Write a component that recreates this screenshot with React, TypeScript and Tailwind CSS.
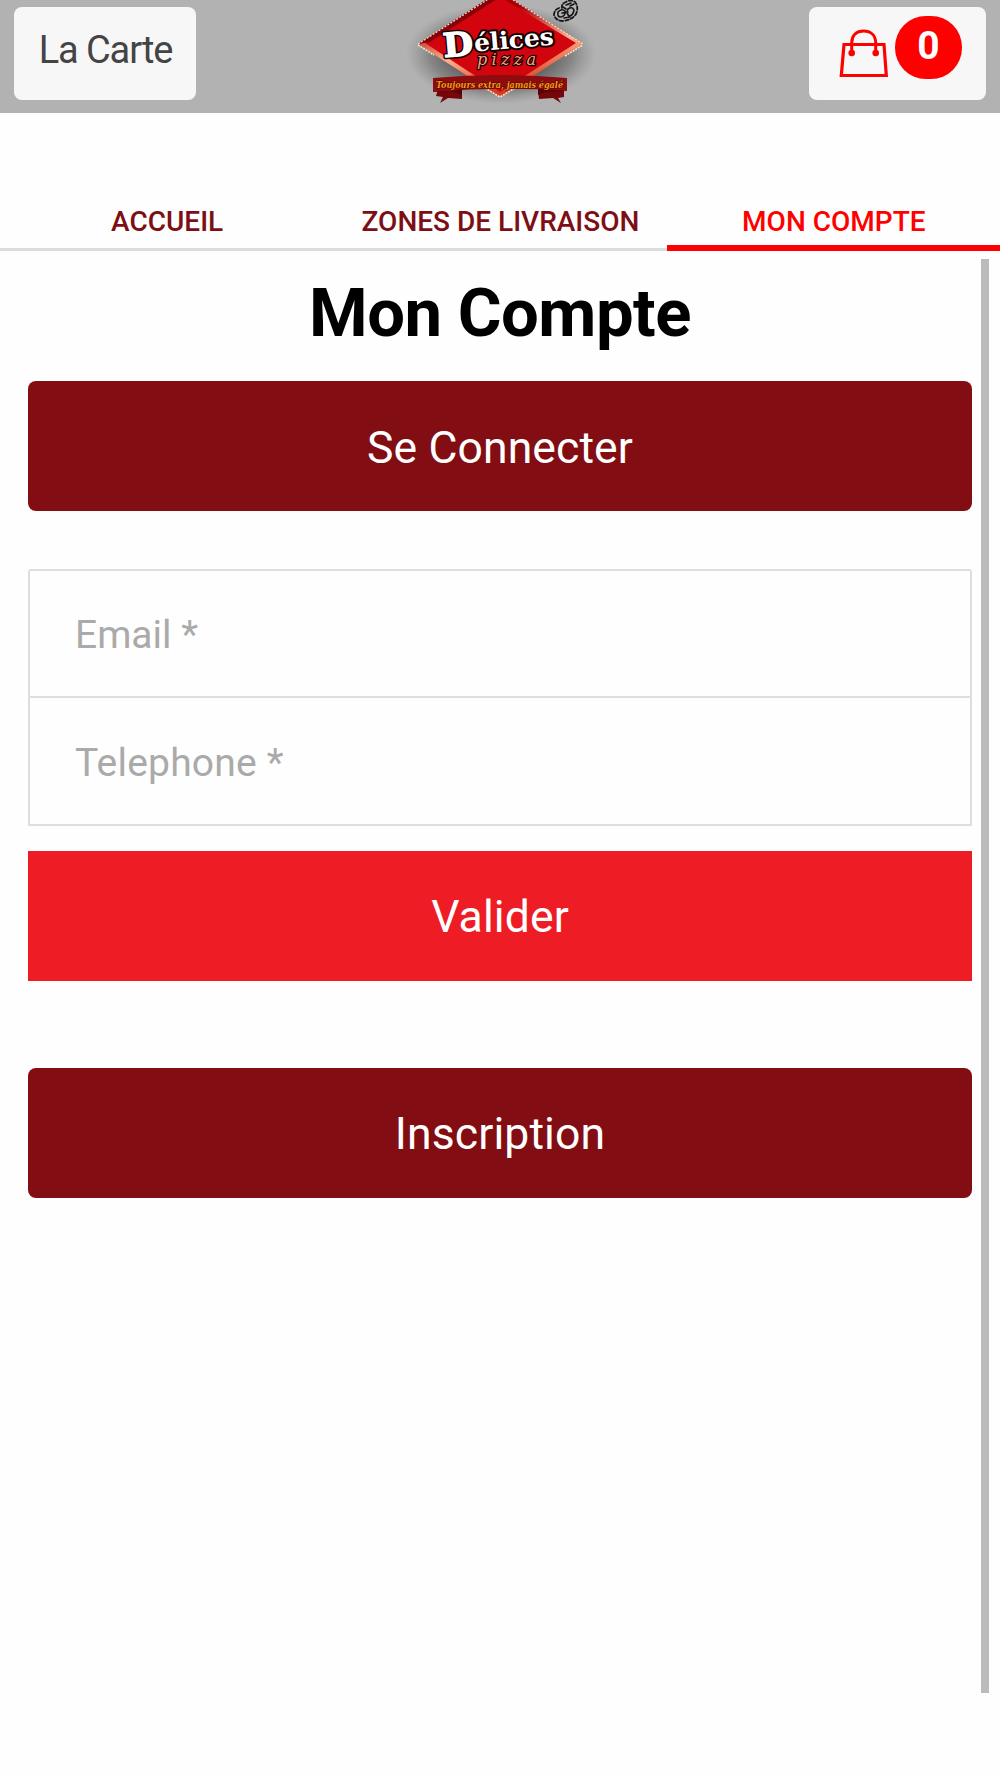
import React from 'react';
import clsx from 'clsx';

interface Tab {
    label: string;
    active?: boolean;
}

const tabs: Tab[] = [
    { label: 'ACCUEIL' },
    { label: 'ZONES DE LIVRAISON' },
    { label: 'MON COMPTE', active: true },
];

const BagIcon: React.FC = () => (
    <svg width="50" height="50" viewBox="0 0 50 50" fill="none" stroke="#ff0000" strokeWidth="3">
        <path d="M5 15.5H45L47.3 46.5H2.3Z" strokeWidth="3.2" />
        <path d="M12.7 24V14C12.7 6 17.5 2 24.5 2S36.7 6 36.7 14V24" />
        <circle cx="12.7" cy="24" r="3.3" fill="#ff0000" stroke="none" />
        <circle cx="36.7" cy="24" r="3.3" fill="#ff0000" stroke="none" />
    </svg>
);

const Logo: React.FC = () => (
    <svg width="200" height="113" viewBox="0 0 200 113">
        <defs>
            <radialGradient id="shadow">
                <stop offset="0.4" stopColor="#333" stopOpacity="0.8" />
                <stop offset="0.75" stopColor="#444" stopOpacity="0.4" />
                <stop offset="1" stopColor="#666" stopOpacity="0" />
            </radialGradient>
            <linearGradient id="edge" x1="0" y1="0" x2="0.3" y2="1">
                <stop offset="0.3" stopColor="#a50008" />
                <stop offset="0.65" stopColor="#ffb08a" />
                <stop offset="1" stopColor="#d63a20" />
            </linearGradient>
        </defs>
        <ellipse cx="101" cy="54" rx="95" ry="50" fill="url(#shadow)" />
        <path d="M100 -9L183 44L100 97L18 44Z" fill="url(#edge)" />
        <path d="M100 -3L176 43L100 92L25 43Z" fill="#d2050e" />
        <path d="M97 -1L30 42L18 44L90 -3Z" fill="#880008" />
        <path d="M18 44L90 -2M110 -2L183 44" stroke="#f4ddd2" strokeWidth="1.2" strokeDasharray="2 1.5" />
        <path d="M18 45L34 55M165 56L183 45M85 88L100 97L115 88" fill="none" stroke="#ffe2c8" strokeWidth="1.6" strokeDasharray="2 1" />

        {/* brand name, dark outline under a slightly fattened white face */}
        <g transform="rotate(-5 46 57)" fontFamily="'DejaVu Serif', serif" fontWeight="900" strokeLinejoin="round">
            <text x="44" y="57" fontSize="33" fill="#160000" stroke="#160000" strokeWidth="4.5" textLength="30" lengthAdjust="spacingAndGlyphs">D</text>
            <text x="75" y="54" fontSize="24" fill="#fff" stroke="#160000" strokeWidth="4" paintOrder="stroke" textLength="80" lengthAdjust="spacingAndGlyphs">élices</text>
            <text x="44" y="57" fontSize="33" fill="#fff" stroke="#fff" strokeWidth="1.4" textLength="30" lengthAdjust="spacingAndGlyphs" aria-hidden="true">D</text>
        </g>
        <text x="77" y="65" fontFamily="'DejaVu Serif', serif" fontSize="16" fontStyle="italic" fill="#f3a583" stroke="#190000" strokeWidth="2.6" paintOrder="stroke" textLength="59" lengthAdjust="spacing">pizza</text>

        {/* ribbon */}
        <path d="M38 89H62V99L48 98L40 103L43 97L36 96Z" fill="#75060a" />
        <path d="M138 89H164V97L158 98L161 103L153 98L139 99Z" fill="#75060a" />
        <path d="M33 78Q100 72 167 78V91Q100 86 33 92Z" fill="#8e0b10" />
        <path d="M33 91Q45 94 62 89V95L55 92ZM138 89V95L145 92L167 91Z" fill="#560206" />
        <text x="36" y="88" fontFamily="'DejaVu Serif', serif" fontSize="10" fontWeight="700" fontStyle="italic" fill="#f29a13" stroke="#4a0400" strokeWidth="0.8" paintOrder="stroke" textLength="127" lengthAdjust="spacingAndGlyphs">Toujours extra, jamais égalé</text>

        {/* small emblem */}
        <g fill="none" stroke="#161616" strokeWidth="1.8" strokeLinecap="round">
            <path d="M159 8Q154 10 154 15Q156 21 163 21Q172 20 176 14Q179 7 175 2Q170 -1 166 2Q161 4 162 8" strokeDasharray="3.5 2.2" />
            <path d="M158 12Q162 8 165 11Q166 16 161 17Q157 17 158 12M168 9Q172 6 174 10Q173 16 169 16Q166 13 168 9M166 5L171 3M170 6L174 4M162 13L168 12M164 18L170 17M163 7L166 9" strokeWidth="1.6" />
        </g>
    </svg>
);

const ActionButton: React.FC<{ label: string; className?: string }> = ({ label, className }) => (
    <button className={clsx('flex h-[130px] w-full shrink-0 items-center justify-center text-[44.5px] tracking-[0.1px] text-white', className)}>
        {label}
    </button>
);

const App: React.FC = () => {
    return (
        <div className="flex h-[1778px] w-[1000px] flex-col overflow-hidden bg-[#fefefe] font-['Roboto',sans-serif]">
            <header className="grid h-[113px] shrink-0 grid-cols-[182px_200px_177px] items-start justify-between bg-[#b2b2b2] px-[14px]">
                <button className="mt-[7px] flex h-[93px] items-center justify-center rounded-lg bg-[#f7f7f7] pb-[6px] pl-px text-[38px] tracking-[-1.1px] text-[#444]">
                    La Carte
                </button>
                <div className="-ml-[3px]"><Logo /></div>
                <button className="mt-[7px] flex h-[93px] items-start rounded-lg bg-[#f7f7f7] pl-[30px]">
                    <span className="mt-[22px]"><BagIcon /></span>
                    <span className="mt-[9px] ml-[6px] flex h-[63px] w-[67px] items-center justify-center rounded-[31px] bg-[#ff0000] pb-[3px] text-[39px] font-bold text-white">
                        0
                    </span>
                </button>
            </header>

            <nav className="mt-[78px] grid h-[60px] shrink-0 grid-cols-3">
                {tabs.map((tab) => (
                    <a
                        key={tab.label}
                        className={clsx(
                            'flex items-start justify-center pt-[14px] pl-px text-[28px] leading-[33px] font-medium',
                            tab.active ? 'border-b-[6px] border-[#ff0000] text-[#ff0000]' : 'border-b-[3px] border-[#dcdcdc] text-[#7c0e14]'
                        )}
                    >
                        {tab.label}
                    </a>
                ))}
            </nav>

            <main className="mt-2 mr-[11px] flex h-[1434px] shrink-0 flex-col border-r-8 border-[#bbb] pr-[9px] pl-[28px]">
                <h1 className="mt-[14px] text-center text-[67px] leading-[80px] font-bold tracking-[-0.5px] text-black">Mon Compte</h1>

                <ActionButton label="Se Connecter" className="mt-[28px] rounded-lg bg-[#820e13] pt-[4px]" />

                <form className="mt-[58px] flex shrink-0 flex-col">
                    <input
                        placeholder="Email *"
                        className="h-[129px] rounded-t-[3px] border-2 border-[#dedede] px-[45px] pt-[3px] text-[39px] placeholder:text-[#aaa] placeholder:opacity-100"
                    />
                    <input
                        placeholder="Telephone *"
                        className="h-[128px] border-2 border-t-0 border-[#dedede] px-[45px] pt-[3px] text-[39px] tracking-[0.2px] placeholder:text-[#aaa] placeholder:opacity-100"
                    />
                    <ActionButton label="Valider" className="mt-[25px] bg-[#ee1c24] pt-[2px]" />
                </form>

                <ActionButton label="Inscription" className="mt-[87px] rounded-lg bg-[#820e13] pt-[2px]" />
            </main>
        </div>
    );
};

export default App;
